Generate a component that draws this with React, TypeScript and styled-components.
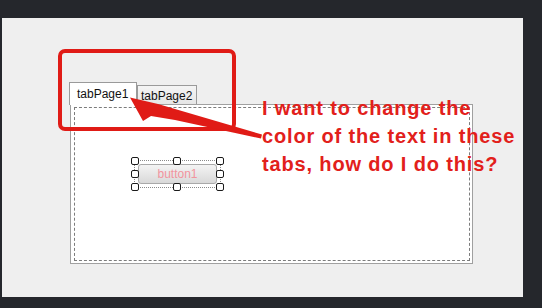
import styled, { createGlobalStyle } from 'styled-components'

const GlobalStyle = createGlobalStyle`
  html, body {
    margin: 0;
    padding: 0;
    background: #25272c;
  }
  * {
    box-sizing: border-box;
  }
`

const Screen = styled.div`
  display: flex;
  width: 542px;
  height: 308px;
  padding: 18px 19px 11px 2px;
  background: #25272c;
`

const Panel = styled.div`
  position: relative;
  flex: 1;
  padding: 64px 0 0 68px;
  background: #efefef;
  overflow: hidden;
`

const TabControl = styled.div`
  width: 403px;
  font-family: 'Liberation Sans', Arial, sans-serif;
  font-size: 12px;
`

const TabStrip = styled.div`
  position: relative;
  display: flex;
  align-items: flex-end;
  height: 23px;
  margin: 0 0 -1px -1px;
`

const Tab = styled.div<{ $active?: boolean }>`
  display: flex;
  align-items: center;
  width: ${(p) => (p.$active ? '68px' : '60px')};
  height: ${(p) => (p.$active ? '23px' : '19px')};
  margin-bottom: ${(p) => (p.$active ? '0' : '1px')};
  padding-left: ${(p) => (p.$active ? '7px' : '3px')};
  padding-top: ${(p) => (p.$active ? '0' : '1px')};
  border: 1px solid #9a9a9a;
  border-bottom: none;
  background: ${(p) =>
    p.$active ? '#ffffff' : 'linear-gradient(#f4f4f4, #e6e6e6)'};
  color: #111;
`

const Page = styled.div`
  height: 160px;
  padding: 2px 2px 2px 3px;
  border: 1px solid #a0a0a0;
  background: #ffffff;
`

const DesignSurface = styled.div`
  height: 100%;
  padding: 52px 0 0 59px;
  border: 1px dashed #7c7c7c;
`

const Selection = styled.div`
  position: relative;
  display: inline-block;
  padding: 3px;
  border: 1px dotted #8a8a8a;
`

const Handle = styled.span<{ $x: string; $y: string }>`
  position: absolute;
  left: ${(p) => p.$x};
  top: ${(p) => p.$y};
  width: 8px;
  height: 8px;
  margin: -4.5px 0 0 -4.5px;
  border: 1px solid #1a1a1a;
  border-radius: 2px;
  background: #fff;
`

const Button = styled.div`
  display: flex;
  align-items: center;
  justify-content: center;
  width: 79px;
  height: 20px;
  border: 1px solid #a9a9a9;
  border-radius: 3px;
  background: linear-gradient(#f4f4f4, #e6e6e6 50%, #d9d9d9);
  color: #f2949e;
  font-family: 'Liberation Sans', Arial, sans-serif;
  font-size: 12px;
`

const Highlight = styled.div`
  position: absolute;
  left: 56px;
  top: 31px;
  width: 178px;
  height: 82px;
  border: 4px solid #e01b16;
  border-radius: 7px;
`

const ArrowLayer = styled.svg`
  position: absolute;
  left: 0;
  top: 0;
`

const Note = styled.div`
  position: absolute;
  left: 260px;
  top: 76px;
  color: #e2201b;
  font-family: 'Liberation Sans', Arial, sans-serif;
  font-size: 20px;
  font-weight: 700;
  line-height: 28px;
  letter-spacing: 0.85px;
  white-space: nowrap;
`

const handles: [string, string][] = [
  ['0%', '0%'],
  ['50%', '0%'],
  ['100%', '0%'],
  ['0%', '50%'],
  ['100%', '50%'],
  ['0%', '100%'],
  ['50%', '100%'],
  ['100%', '100%'],
]

export default function App() {
  return (
    <>
      <GlobalStyle />
      <Screen>
        <Panel>
          <TabControl>
            <TabStrip>
              <Tab $active>tabPage1</Tab>
              <Tab>tabPage2</Tab>
            </TabStrip>
            <Page>
              <DesignSurface>
                <Selection>
                  {handles.map(([x, y], i) => (
                    <Handle key={i} $x={x} $y={y} />
                  ))}
                  <Button>button1</Button>
                </Selection>
              </DesignSurface>
            </Page>
          </TabControl>

          <Highlight />
          <ArrowLayer width="521" height="279" viewBox="2 18 521 279">
            <polygon
              points="130,97.5 158,104 262,134.5 261,138.5 175,120 151,116 143,121"
              fill="#e01b16"
            />
          </ArrowLayer>
          <Note>
            I want to change the
            <br />
            color of the text in these
            <br />
            tabs, how do I do this?
          </Note>
        </Panel>
      </Screen>
    </>
  )
}
